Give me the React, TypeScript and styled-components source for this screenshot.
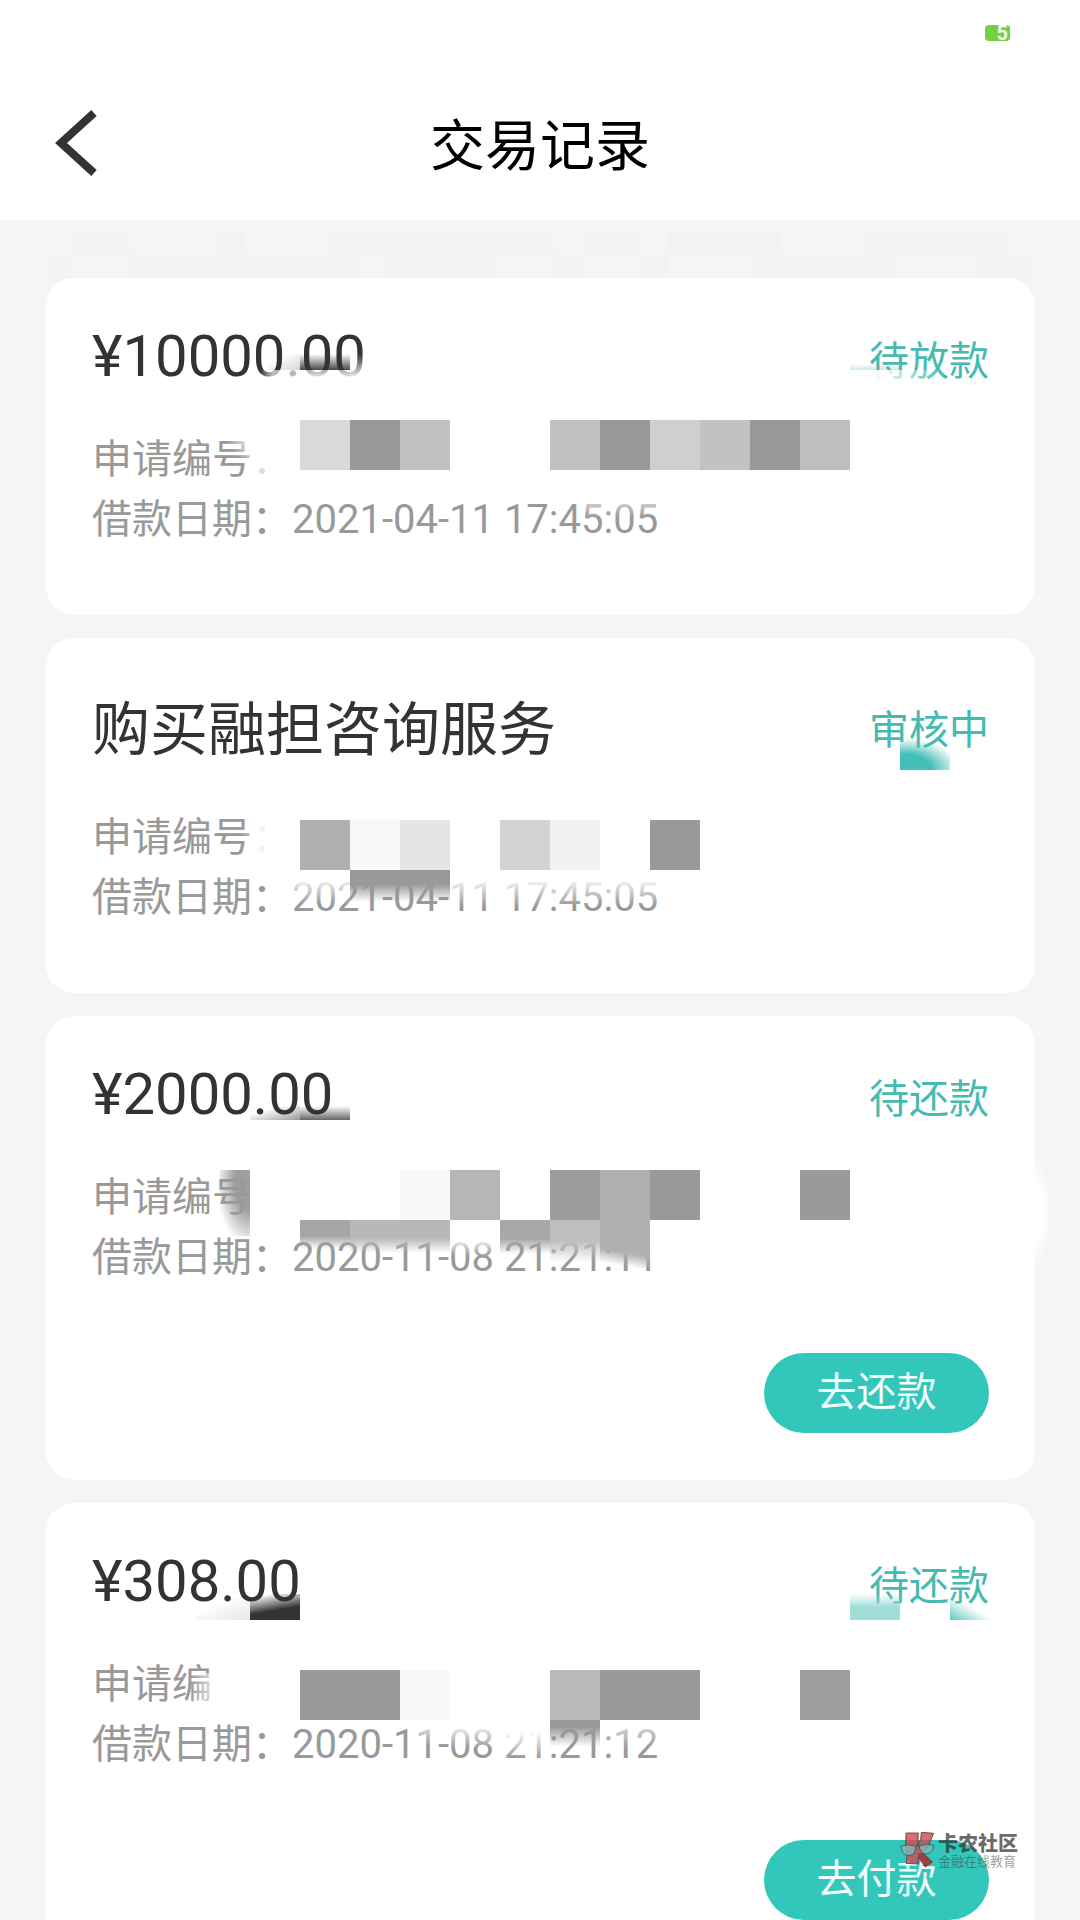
import React from "react";
import styled, { createGlobalStyle } from "styled-components";

const teal = "#33c6bb";
const sans = `Roboto, "Noto Sans CJK SC", sans-serif`;

const GlobalStyle = createGlobalStyle`
  *, *::before, *::after { box-sizing: border-box; }
  body { margin: 0; background: #f5f5f5; font-family: ${sans}; }
  button { font-family: inherit; }
`;

const Screen = styled.div`
  position: relative;
  display: flex;
  flex-direction: column;
  height: 100vh;
  overflow: hidden;
  background: #f5f5f5;
`;

const StatusBar = styled.div`
  display: flex;
  justify-content: flex-end;
  align-items: center;
  flex: none;
  height: 66px;
  padding: 0 70px;
  background: #fff;
`;

const Battery = styled.span`
  display: flex;
  align-items: center;
  justify-content: flex-end;
  width: 25px;
  height: 16px;
  padding-right: 2px;
  border-radius: 4px;
  background: #74cf45;
  color: #f2ffec;
  font-size: 20px;
  font-weight: 700;
  line-height: 16px;
`;

const NavBar = styled.header`
  display: grid;
  grid-template-columns: 120px 1fr 120px;
  align-items: center;
  flex: none;
  height: 154px;
  background: #fff;
`;

const BackButton = styled.button`
  display: flex;
  align-items: center;
  width: 120px;
  height: 100px;
  padding: 0;
  padding-left: 54px;
  border: 0;
  background: none;
  color: #333;
`;

const PageTitle = styled.h1`
  margin: 0;
  padding-top: 6px;
  color: #000;
  font-size: 55px;
  font-weight: 400;
  line-height: 80px;
  text-align: center;
`;

const Records = styled.ul`
  position: relative;
  display: flex;
  flex-direction: column;
  gap: 23px;
  flex: 1;
  min-height: 0;
  margin: 0;
  padding: 58px 45px 58px 46px;
  overflow-y: auto;
  list-style: none;
  scrollbar-width: none;
`;

const Card = styled.li`
  position: relative;
  flex: none;
  border-radius: 28px;
  background: #fff;
`;

const CardBody = styled.div`
  padding: 46px 46px 65px;
`;

const CardHead = styled.div<{ $tall?: boolean }>`
  display: flex;
  align-items: center;
  justify-content: space-between;
  height: ${(p) => (p.$tall ? 86 : 68)}px;
  margin-bottom: 38px;
`;

const Heading = styled.h2<{ $tall?: boolean }>`
  margin: 0;
  padding: ${(p) => (p.$tall ? "6px 0 0" : "0 0 4px")};
  color: #333;
  font-size: 58px;
  font-weight: 400;
  line-height: 64px;
`;

const Status = styled.span`
  padding-top: 8px;
  color: #45bab1;
  font-size: 40px;
  line-height: 60px;
`;

const Info = styled.p`
  margin: 0;
  height: 60px;
  color: #999;
  font-size: 40px;
  line-height: 60px;
  white-space: nowrap;
`;

const Actions = styled.div`
  display: flex;
  justify-content: flex-end;
  padding: 0 46px 47px;
`;

const PillButton = styled.button`
  width: 225px;
  height: 80px;
  padding: 0;
  border: 0;
  border-radius: 40px;
  background: ${teal};
  color: #f0fffd;
  font-size: 40px;
  line-height: 76px;
`;

type Mark = { x: number; y: number; w: number; h: number; fill: string; right?: boolean };

/* A censor mark painted over the card; x counts from the left or right edge. */
const Patch = styled.span<{ $m: Mark }>`
  position: absolute;
  ${(p) => (p.$m.right ? "right" : "left")}: ${(p) => p.$m.x}px;
  top: ${(p) => p.$m.y}px;
  width: ${(p) => p.$m.w}px;
  height: ${(p) => p.$m.h}px;
  background: ${(p) => p.$m.fill};
  pointer-events: none;
`;

const Watermark = styled.div`
  position: absolute;
  right: 62px;
  bottom: 50px;
  display: flex;
  align-items: flex-start;
  gap: 4px;
  height: 38px;
  pointer-events: none;
`;

const WatermarkText = styled.div`
  display: flex;
  flex-direction: column;
  padding-top: 1px;
`;

const Brand = styled.span`
  color: rgba(40, 40, 40, 0.7);
  font-size: 20px;
  font-weight: 900;
  line-height: 22px;
`;

const Slogan = styled.span`
  color: rgba(60, 60, 60, 0.5);
  font-size: 13px;
  line-height: 14px;
`;

const tile = (x: number, y: number, fill: string, w = 50, h = 50): Mark => ({ x, y, w, h, fill });

const down = (from: string, to: string, hold = 0) => `linear-gradient(to bottom, ${from} ${hold}%, ${to})`;
const clearWhite = "rgba(255,255,255,0)";
const fadeDown = (rgb: string, hold: number) => down(`rgba(${rgb},1)`, `rgba(${rgb},0)`, hold);

type Entry = {
  title: string;
  tall?: boolean;
  status: string;
  label: string;
  date: string;
  action?: string;
  marks: Mark[];
};

const entries: Entry[] = [
  {
    title: "¥10000.00",
    status: "待放款",
    label: "申请编号：",
    date: "2021-04-11 17:45:05",
    marks: [
      tile(254, 142, "#d9d9d9"),
      tile(304, 142, "#999"),
      tile(354, 142, "#c1c1c1"),
      tile(504, 142, "#c1c1c1"),
      tile(554, 142, "#999"),
      tile(604, 142, "#cfcfcf"),
      tile(654, 142, "#c2c2c2"),
      tile(704, 142, "#999"),
      tile(754, 142, "#bebebe"),
      tile(254, 76, "linear-gradient(to top, rgba(51,51,51,.9), rgba(51,51,51,0))", 50, 16),
      tile(222, 76, "linear-gradient(to top left, rgba(51,51,51,.2), rgba(51,51,51,0) 70%)", 32, 16),
      tile(214, 92, "linear-gradient(to right, rgba(255,255,255,0), rgba(255,255,255,.65) 30%)", 40, 8),
      tile(254, 92, down("rgba(255,255,255,.6)", "rgba(255,255,255,.9)"), 50, 8),
      tile(304, 76, down(clearWhite, "rgba(255,255,255,.95)"), 16, 24),
      tile(182, 158, `linear-gradient(to bottom left, #fff 10%, ${clearWhite} 60%)`, 28, 38),
      tile(211, 154, "#fff", 20, 32),
      tile(211, 186, "rgba(255,255,255,.68)", 20, 16),
      tile(540, 222, down("rgba(255,255,255,.6)", clearWhite), 78, 18),
      { x: 90, y: 92, w: 80, h: 16, right: true, fill: `linear-gradient(100deg, rgba(255,255,255,.9) 20%, ${clearWhite})` },
      { x: 135, y: 86, w: 50, h: 6, right: true, fill: "linear-gradient(to top, rgba(69,186,177,.3), rgba(69,186,177,0))" },
    ],
  },
  {
    title: "购买融担咨询服务",
    tall: true,
    status: "审核中",
    label: "申请编号：",
    date: "2021-04-11 17:45:05",
    marks: [
      tile(254, 182, "#b0b0b0"),
      tile(304, 182, "#f8f8f8"),
      tile(354, 182, "#e5e5e5"),
      tile(454, 182, "#d3d3d3"),
      tile(504, 182, "#f1f1f1"),
      tile(604, 182, "#999"),
      tile(304, 232, fadeDown("153,153,153", 45), 100, 32),
      tile(234, 232, down("rgba(255,255,255,.95)", clearWhite, 25), 70, 34),
      tile(404, 232, down("rgba(255,255,255,.95)", clearWhite, 25), 214, 36),
      tile(211, 178, "rgba(255,255,255,.88)", 20, 46),
      tile(196, 178, `linear-gradient(to left, rgba(255,255,255,.6), ${clearWhite})`, 15, 46),
      { x: 85, y: 100, w: 50, h: 32, right: true, fill: "radial-gradient(ellipse 56px 32px at 8% 100%, #45bfb5 50%, rgba(69,191,181,0))" },
    ],
  },
  {
    title: "¥2000.00",
    status: "待还款",
    label: "申请编号",
    date: "2020-11-08 21:21:11",
    action: "去还款",
    marks: [
      tile(354, 154, "#f9f9f9"),
      tile(404, 154, "#b6b6b6"),
      tile(504, 154, "#9c9c9c"),
      tile(554, 154, "#afafaf"),
      tile(604, 154, "#999"),
      tile(754, 154, "#9a9a9a"),
      tile(254, 204, fadeDown("165,165,165", 55), 50, 29),
      tile(304, 204, fadeDown("184,184,184", 55), 100, 33),
      tile(404, 204, down("#fff", clearWhite, 50), 50, 36),
      tile(454, 204, fadeDown("168,168,168", 55), 50, 34),
      tile(504, 204, fadeDown("191,191,191", 50), 50, 42),
      tile(554, 204, "linear-gradient(190deg, #b0b0b0 65%, rgba(176,176,176,0) 90%)", 50, 48),
      tile(604, 204, down("#fff", clearWhite, 60), 20, 52),
      tile(174, 154, "radial-gradient(ellipse 34px 68px at 100% 15%, rgba(153,153,153,.95) 45%, rgba(153,153,153,0))", 30, 66),
      tile(204, 154, "#fff", 10, 52),
      tile(204, 90, "linear-gradient(to top left, rgba(51,51,51,.5), rgba(51,51,51,0) 70%)", 50, 14),
      tile(254, 90, "linear-gradient(to top, rgba(51,51,51,.75), rgba(51,51,51,0))", 50, 14),
      { x: -16, y: 144, w: 16, h: 104, right: true, fill: "radial-gradient(ellipse 16px 52px at 0% 50%, #fff 55%, rgba(255,255,255,0))" },
    ],
  },
  {
    title: "¥308.00",
    status: "待还款",
    label: "申请编",
    date: "2020-11-08 21:21:12",
    action: "去付款",
    marks: [
      tile(254, 167, "#999", 100),
      tile(354, 167, "#f9f9f9"),
      tile(504, 167, "#b9b9b9"),
      tile(554, 167, "#999", 100),
      tile(754, 167, "#9e9e9e"),
      tile(504, 217, fadeDown("153,153,153", 25), 50, 27),
      tile(364, 217, down("rgba(255,255,255,.8)", clearWhite, 10), 40, 26),
      tile(404, 217, down("rgba(255,255,255,.9)", clearWhite, 20), 50, 28),
      tile(454, 217, down("#fff", clearWhite, 30), 50, 38),
      tile(554, 217, down("rgba(255,255,255,.8)", clearWhite), 64, 28),
      tile(144, 170, `linear-gradient(to left, rgba(255,255,255,.85), ${clearWhite})`, 28, 44),
      tile(204, 91, "linear-gradient(170deg, rgba(51,51,51,0) 10%, #333 60%)", 50, 26),
      tile(150, 95, "linear-gradient(to top left, rgba(51,51,51,.12), rgba(51,51,51,0) 70%)", 54, 22),
      { x: 135, y: 91, w: 50, h: 26, right: true, fill: "linear-gradient(to bottom, rgba(156,220,214,0), rgba(156,220,214,.95) 50%)" },
      { x: 45, y: 97, w: 40, h: 20, right: true, fill: "linear-gradient(30deg, #62c9c0, rgba(98,201,192,0) 60%)" },
    ],
  },
];

const stripMarks: Mark[] = [
  [74, 9, 57], [217, 9, 27], [329, 9, 141], [470, 9, 84], [583, 9, 56], [668, 9, 112], [865, 9, 142],
  [47, 33, 27], [131, 33, 226], [386, 33, 112], [554, 33, 28], [639, 33, 29], [751, 33, 143], [978, 33, 57],
].map(([x, y, w]) => ({ x, y, w, h: y === 9 ? 24 : 25, fill: "#f3f3f3" }));

const BackIcon = () => (
  <svg width="44" height="68" viewBox="0 0 44 68" fill="none" aria-hidden="true">
    <path d="M40 4 L7 34 L40 64" stroke="currentColor" strokeWidth="8" />
  </svg>
);

const WatermarkLogo = () => (
  <svg width="34" height="36" viewBox="0 0 102 108" aria-hidden="true">
    <g fill="#cf4a55" fillOpacity="0.82" stroke="#54353a" strokeOpacity="0.8" strokeWidth="3">
      <path d="M18 3 H55 L53 42 L62 22 L64 1 L101 4 L82 48 L68 62 L97 90 L76 105 L55 76 L54 96 L18 94 L22 66 L17 46 Z" />
    </g>
    <path d="M54 64 L68 62 L97 90 L76 105 L54 74 Z" fill="#8c2833" fillOpacity="0.6" />
    <g fill="#7fb9b6" fillOpacity="0.8" stroke="#2f5a5a" strokeOpacity="0.85" strokeWidth="3">
      <path d="M1 43 Q24 34 46 42 Q48 66 32 70 Q10 74 5 52 Z" />
      <path d="M57 42 Q78 34 101 39 Q100 62 82 66 Q62 68 57 42 Z" />
      <path d="M46 44 Q51 39 57 44" fill="none" />
    </g>
  </svg>
);

function RecordCard({ entry }: { entry: Entry }) {
  return (
    <Card>
      <CardBody>
        <CardHead $tall={entry.tall}>
          <Heading $tall={entry.tall}>{entry.title}</Heading>
          <Status>{entry.status}</Status>
        </CardHead>
        <Info>{entry.label}</Info>
        <Info>
          借款日期：<time>{entry.date}</time>
        </Info>
      </CardBody>
      {entry.action && (
        <Actions>
          <PillButton type="button">{entry.action}</PillButton>
        </Actions>
      )}
      {entry.marks.map((m, i) => (
        <Patch key={i} $m={m} />
      ))}
    </Card>
  );
}

export default function App() {
  return (
    <>
      <GlobalStyle />
      <Screen>
        <StatusBar>
          <Battery>5</Battery>
        </StatusBar>
        <NavBar>
          <BackButton type="button" aria-label="返回">
            <BackIcon />
          </BackButton>
          <PageTitle>交易记录</PageTitle>
        </NavBar>
        <Records>
          {stripMarks.map((m, i) => (
            <Patch as="li" key={i} $m={m} aria-hidden="true" />
          ))}
          {entries.map((entry, i) => (
            <RecordCard key={i} entry={entry} />
          ))}
        </Records>
        <Watermark>
          <WatermarkLogo />
          <WatermarkText>
            <Brand>卡农社区</Brand>
            <Slogan>金融在线教育</Slogan>
          </WatermarkText>
        </Watermark>
      </Screen>
    </>
  );
}
